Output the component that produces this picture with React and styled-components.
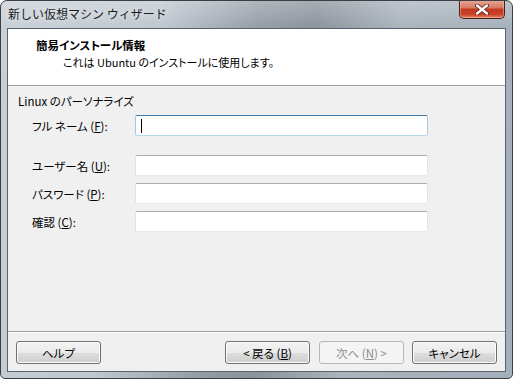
import React from "react";
import styled, { createGlobalStyle } from "styled-components";

const GlobalStyle = createGlobalStyle`
  html, body {
    margin: 0;
    padding: 0;
    background: #ffffff;
  }
  body {
    font-family: "Noto Sans CJK JP", "Noto Sans", sans-serif;
    font-feature-settings: "palt";
    font-size: 12px;
    color: #000;
  }
`;

const Window = styled.div`
  box-sizing: border-box;
  width: 513px;
  height: 379px;
  display: flex;
  flex-direction: column;
  padding: 0 6px 6px 6px;
  border: 1px solid #3b3f44;
  border-radius: 7px 7px 5px 5px;
  background:
    linear-gradient(180deg, rgba(255, 255, 255, 0.25) 0px, rgba(255, 255, 255, 0) 28px),
    linear-gradient(
      100deg,
      #c9d0d7 0%,
      #bfc7cf 28%,
      #959da5 45%,
      #8a929a 55%,
      #aab3bd 70%,
      #a3afbb 100%
    );
  overflow: hidden;
`;

const TitleBar = styled.div`
  height: 27px;
  display: flex;
  align-items: flex-start;
  justify-content: space-between;
`;

const Caption = styled.div`
  padding: 5px 0 0 1px;
  font-size: 12px;
  line-height: 16px;
  font-feature-settings: normal;
  color: #1a1a1a;
  text-shadow: 0 0 6px rgba(255, 255, 255, 0.9);
`;

const CloseButton = styled.div`
  box-sizing: border-box;
  width: 46px;
  height: 19px;
  margin-top: -1px;
  margin-right: 1px;
  border: 1px solid #4b1f18;
  border-top: none;
  border-radius: 0 0 5px 5px;
  background: linear-gradient(
    180deg,
    #e9a99a 0%,
    #d7765f 45%,
    #c1391f 50%,
    #c9432a 80%,
    #e0866a 100%
  );
  box-shadow: inset 0 0 0 1px rgba(255, 200, 180, 0.45);
  display: flex;
  align-items: center;
  justify-content: center;
`;

const Client = styled.div`
  flex: 1;
  display: flex;
  flex-direction: column;
  background: #f0f0f0;
  border: 1px solid #56626e;
`;

const Header = styled.div`
  height: 57px;
  background: #ffffff;
  border-bottom: 1px solid #a0a0a0;
  box-sizing: border-box;
  padding-top: 8px;
`;

const HeaderTitle = styled.div`
  padding-left: 28px;
  font-size: 11.5px;
  line-height: 16px;
  font-weight: bold;
`;

const HeaderSub = styled.div`
  padding-left: 55px;
  margin-top: 1px;
  font-size: 11px;
  line-height: 16px;
`;

const Body = styled.div`
  flex: 1;
  padding: 7px 0 0 10px;
`;

const GroupLabel = styled.div`
  font-size: 11.5px;
  line-height: 16px;
  margin-bottom: 6px;
`;

const Row = styled.div`
  display: flex;
  align-items: center;
  padding-left: 14px;
  margin-bottom: ${(p) => (p.$gap ? p.$gap : 7)}px;
`;

const Label = styled.div`
  width: 103px;
  font-size: 11.5px;
  line-height: 16px;
`;

const Key = styled.span`
  text-decoration: underline;
`;

const Field = styled.div`
  box-sizing: border-box;
  width: 293px;
  height: 21px;
  background: #ffffff;
  border: 1px solid ${(p) => (p.$focused ? "#a4c9e3" : "#e2e3ea")};
  border-top-color: ${(p) => (p.$focused ? "#3d7bad" : "#abadb3")};
  border-bottom-color: ${(p) => (p.$focused ? "#b7d9ed" : "#e3e9ef")};
  border-radius: 2px;
  display: flex;
  align-items: center;
  padding-left: 5px;
`;

const Caret = styled.span`
  width: 1px;
  height: 14px;
  background: #000;
`;

const Footer = styled.div`
  border-top: 1px solid #a0a0a0;
  box-shadow: inset 0 1px 0 #ffffff;
  padding: 9px 8px 7px 8px;
  display: flex;
  justify-content: space-between;
`;

const ButtonGroup = styled.div`
  display: flex;
  gap: 9px;
`;

const Button = styled.div`
  box-sizing: border-box;
  width: 85px;
  height: 23px;
  border: 1px solid ${(p) => (p.$disabled ? "#b4b8bb" : "#707070")};
  border-radius: 3px;
  background: ${(p) =>
    p.$disabled
      ? "#f4f4f4"
      : "linear-gradient(180deg, #f2f2f2 0%, #ebebeb 50%, #dddddd 50%, #cfcfcf 100%)"};
  box-shadow: inset 0 0 0 1px ${(p) => (p.$disabled ? "#f4f4f4" : "#fcfcfc")};
  color: ${(p) => (p.$disabled ? "#8c8c8c" : "#000")};
  font-size: 11.5px;
  line-height: 16px;
  display: flex;
  align-items: center;
  justify-content: center;
  margin-left: ${(p) => (p.$tight ? -1 : 0)}px;
`;

const fields = [
  { label: "ユーザー名", key: "U" },
  { label: "パスワード", key: "P" },
  { label: "確認", key: "C" },
];

export default function App() {
  return (
    <>
      <GlobalStyle />
      <Window>
        <TitleBar>
          <Caption>新しい仮想マシン ウィザード</Caption>
          <CloseButton>
            <svg width="14" height="11" viewBox="0 0 14 11">
              <path
                d="M2 1.5 L12 9.5 M12 1.5 L2 9.5"
                stroke="#5a1f14"
                strokeWidth="4"
                strokeLinecap="round"
              />
              <path
                d="M2 1.5 L12 9.5 M12 1.5 L2 9.5"
                stroke="#ffffff"
                strokeWidth="2.4"
                strokeLinecap="round"
              />
            </svg>
          </CloseButton>
        </TitleBar>
        <Client>
          <Header>
            <HeaderTitle>簡易インストール情報</HeaderTitle>
            <HeaderSub>これは Ubuntu のインストールに使用します。</HeaderSub>
          </Header>
          <Body>
            <GroupLabel>Linux のパーソナライズ</GroupLabel>
            <Row $gap={19}>
              <Label>
                フル ネーム (<Key>F</Key>):
              </Label>
              <Field $focused>
                <Caret />
              </Field>
            </Row>
            {fields.map((f) => (
              <Row key={f.key}>
                <Label>
                  {f.label} (<Key>{f.key}</Key>):
                </Label>
                <Field />
              </Row>
            ))}
          </Body>
          <Footer>
            <Button>ヘルプ</Button>
            <ButtonGroup>
              <Button>
                &lt; 戻る (<Key>B</Key>)
              </Button>
              <Button $disabled>
                次へ (<Key>N</Key>) &gt;
              </Button>
              <Button $tight>キャンセル</Button>
            </ButtonGroup>
          </Footer>
        </Client>
      </Window>
    </>
  );
}
